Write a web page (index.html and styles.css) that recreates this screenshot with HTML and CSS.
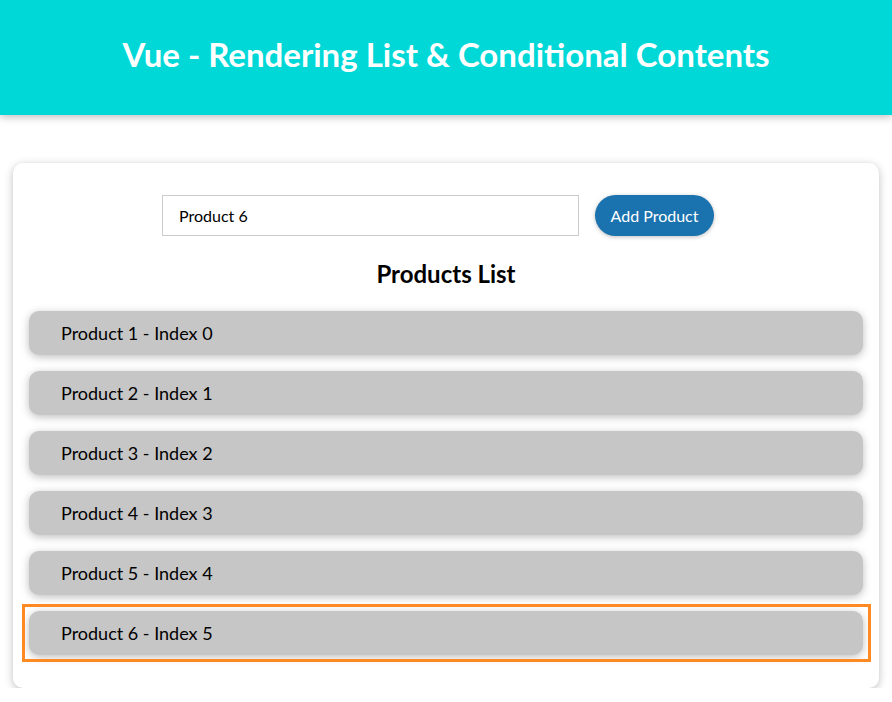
FILE: index.html
```html
<!DOCTYPE html>
<html lang="en">
<head>
<meta charset="utf-8">
<title>Vue - Rendering List &amp; Conditional Contents</title>
<link rel="stylesheet" href="styles.css">
</head>
<body>
<header class="site-header">
  <h1 class="site-title">Vue - Rendering List &amp; Conditional Contents</h1>
</header>
<section class="card">
  <div class="add-form">
    <input class="product-input" type="text" value="Product 6">
    <button class="add-btn" type="button">Add Product</button>
  </div>
  <h2 class="list-title">Products List</h2>
  <ul class="product-list">
    <li class="product-item">Product 1 - Index 0</li>
    <li class="product-item">Product 2 - Index 1</li>
    <li class="product-item">Product 3 - Index 2</li>
    <li class="product-item">Product 4 - Index 3</li>
    <li class="product-item">Product 5 - Index 4</li>
    <li class="product-item is-new">Product 6 - Index 5</li>
  </ul>
</section>
</body>
</html>
```
FILE: styles.css
```css
* { box-sizing: border-box; }
html, body {
  margin: 0;
  padding: 0;
  background: #ffffff;
  font-family: "Lato", "Noto Sans", sans-serif;
  color: #000;
}
.site-header {
  height: 115px;
  background: #00d8d8;
  box-shadow: 0 2px 8px rgba(0, 0, 0, 0.26);
  display: flex;
  align-items: center;
  justify-content: center;
}
.site-title {
  margin: 0 0 7px 0;
  color: #ffffff;
  font-size: 33px;
  font-weight: 700;
}
.card {
  margin: 48px 13px 0 13px;
  padding: 32px 16px 17px 16px;
  background: #fff;
  border-radius: 10px;
  box-shadow: 0 2px 8px rgba(0, 0, 0, 0.26);
}
.add-form {
  display: flex;
  justify-content: center;
  align-items: center;
}
.product-input {
  width: 50%;
  height: 41px;
  border: 1px solid #cccccc;
  padding: 0 16px;
  font: inherit;
  font-size: 16px;
  color: #000;
}
.add-btn {
  margin: 0 16px;
  width: 119px;
  height: 41px;
  border: none;
  border-radius: 21px;
  background: #1a72ae;
  color: #fff;
  font: inherit;
  font-size: 16px;
  box-shadow: 0 1px 4px rgba(0, 0, 0, 0.26);
}
.list-title {
  margin: 18px 0 17px 0;
  text-align: center;
  font-size: 24px;
  font-weight: 700;
  line-height: 40px;
}
.product-list {
  list-style: none;
  margin: 0;
  padding: 0;
}
.product-item {
  position: relative;
  height: 44px;
  margin: 0 0 16px 0;
  padding: 0 32px;
  display: flex;
  align-items: center;
  background: #c6c6c6;
  border-radius: 10px;
  box-shadow: 0 2px 8px rgba(0, 0, 0, 0.26);
  font-size: 18px;
}
.product-item.is-new::after {
  content: "";
  position: absolute;
  top: -7px;
  bottom: -7px;
  left: -7px;
  right: -8px;
  border: 3px solid #ff8a24;
  pointer-events: none;
}
```
